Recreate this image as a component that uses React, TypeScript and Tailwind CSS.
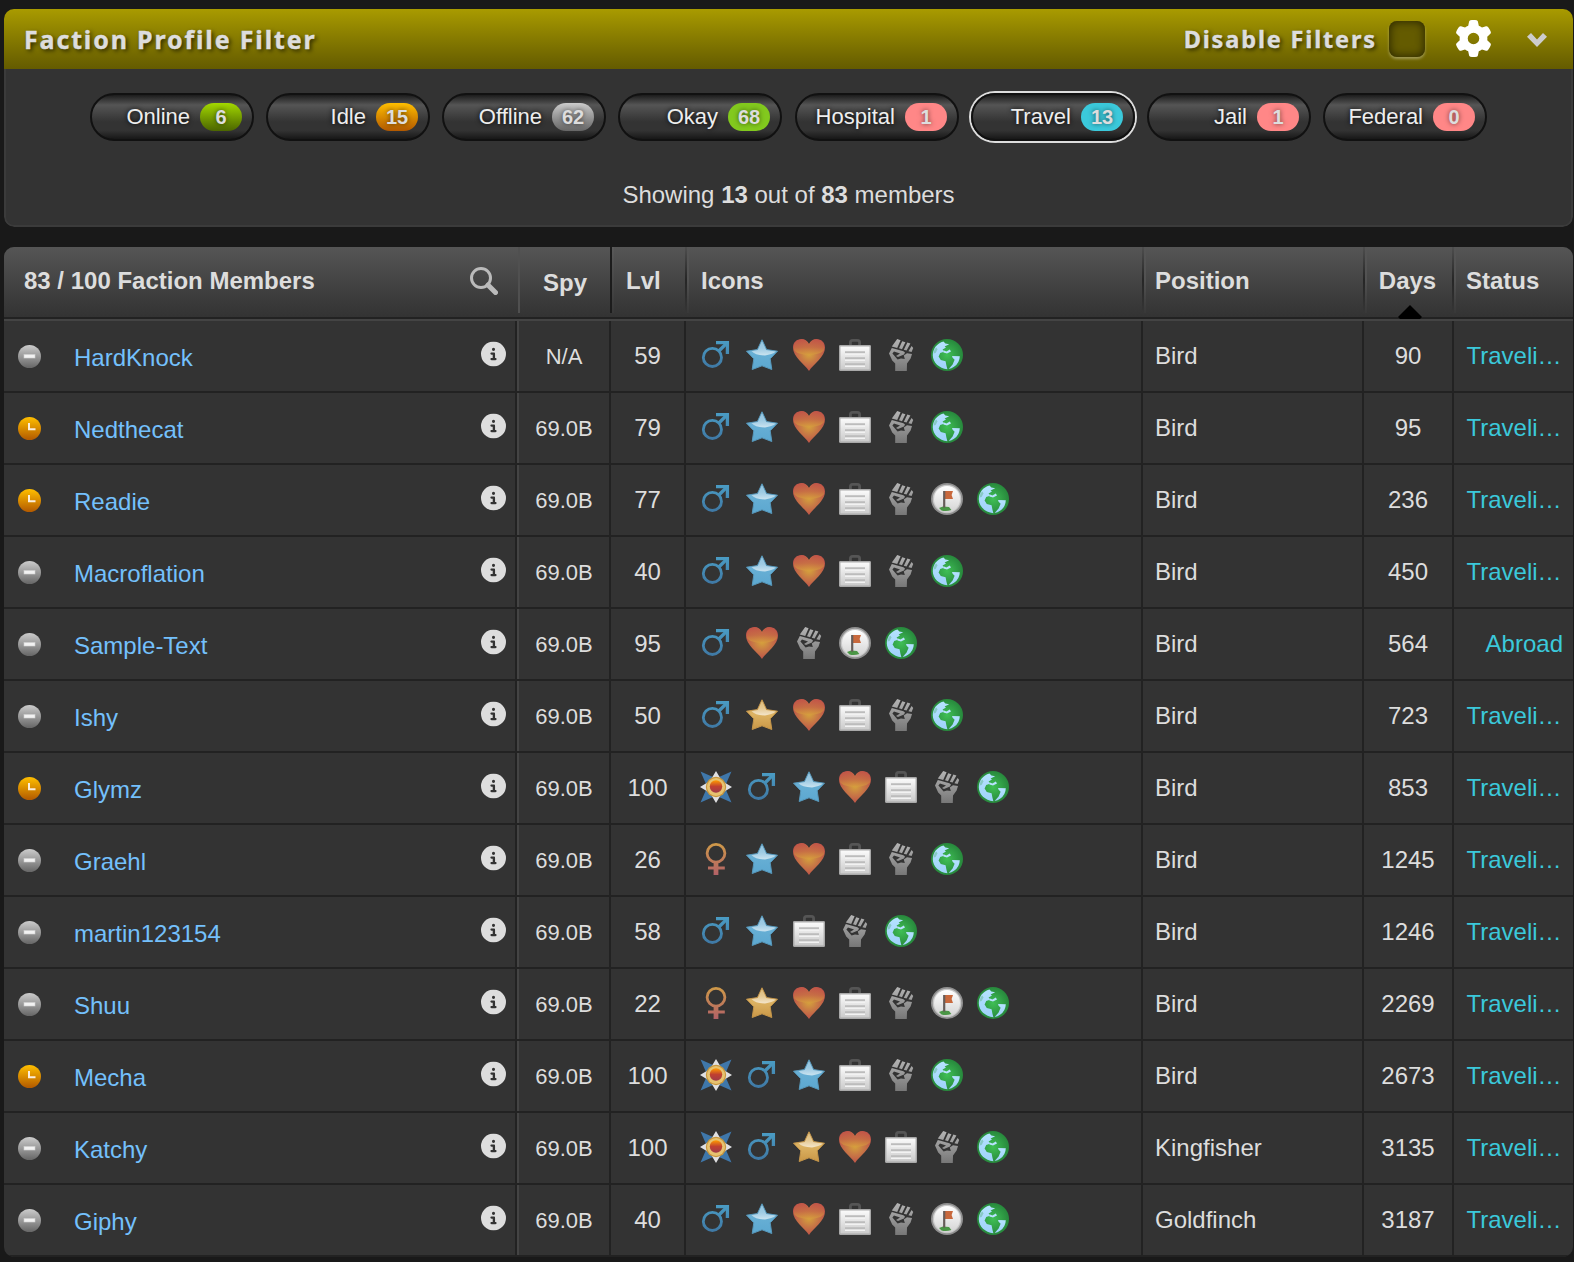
import React from "react";
import { FaGear, FaCircleInfo } from "react-icons/fa6";

type IconName = "medal" | "male" | "female" | "blueStar" | "goldStar" | "heart" | "job" | "fist" | "flag" | "globe";

const CODES: Record<string, IconName> = {
  M: "medal",
  m: "male",
  f: "female",
  b: "blueStar",
  g: "goldStar",
  h: "heart",
  j: "job",
  x: "fist",
  r: "flag",
  w: "globe",
};

interface Member {
  name: string;
  idle?: boolean;
  spy: string;
  lvl: number;
  icons: string;
  position: string;
  days: number;
  abroad?: boolean;
}

const MEMBERS: Member[] = [
  { name: "HardKnock", spy: "N/A", lvl: 59, icons: "mbhjxw", position: "Bird", days: 90 },
  { name: "Nedthecat", idle: true, spy: "69.0B", lvl: 79, icons: "mbhjxw", position: "Bird", days: 95 },
  { name: "Readie", idle: true, spy: "69.0B", lvl: 77, icons: "mbhjxrw", position: "Bird", days: 236 },
  { name: "Macroflation", spy: "69.0B", lvl: 40, icons: "mbhjxw", position: "Bird", days: 450 },
  { name: "Sample-Text", spy: "69.0B", lvl: 95, icons: "mhxrw", position: "Bird", days: 564, abroad: true },
  { name: "Ishy", spy: "69.0B", lvl: 50, icons: "mghjxw", position: "Bird", days: 723 },
  { name: "Glymz", idle: true, spy: "69.0B", lvl: 100, icons: "Mmbhjxw", position: "Bird", days: 853 },
  { name: "Graehl", spy: "69.0B", lvl: 26, icons: "fbhjxw", position: "Bird", days: 1245 },
  { name: "martin123154", spy: "69.0B", lvl: 58, icons: "mbjxw", position: "Bird", days: 1246 },
  { name: "Shuu", spy: "69.0B", lvl: 22, icons: "fghjxrw", position: "Bird", days: 2269 },
  { name: "Mecha", idle: true, spy: "69.0B", lvl: 100, icons: "Mmbjxw", position: "Bird", days: 2673 },
  { name: "Katchy", spy: "69.0B", lvl: 100, icons: "Mmghjxw", position: "Kingfisher", days: 3135 },
  { name: "Giphy", spy: "69.0B", lvl: 40, icons: "mbhjxrw", position: "Goldfinch", days: 3187 },
];

interface Filter {
  label: string;
  count: number;
  badge: string;
  active?: boolean;
}

const ACTIVITY_FILTERS: Filter[] = [
  { label: "Online", count: 6, badge: "bg-linear-to-b from-[#a3d900] to-[#4c6600]" },
  { label: "Idle", count: 15, badge: "bg-linear-to-b from-[#ffbf00] to-[#b25900]" },
  { label: "Offline", count: 62, badge: "bg-linear-to-b from-[#cccccc] to-[#666666]" },
  { label: "Okay", count: 68, badge: "bg-[#82c91e]" },
];

const STATUS_FILTERS: Filter[] = [
  { label: "Hospital", count: 1, badge: "bg-[#ff8787]" },
  { label: "Travel", count: 13, badge: "bg-[#3bc9db]", active: true },
  { label: "Jail", count: 1, badge: "bg-[#ff8787]" },
  { label: "Federal", count: 0, badge: "bg-[#ff8787]" },
];

/** Gradients shared by every icon in the table. */
function IconDefs() {
  const linear = (id: string, stops: string[]) => (
    <linearGradient id={id} x1="0" y1="0" x2="0" y2="1">
      {stops.map((c, i) => (
        <stop key={i} offset={i / (stops.length - 1)} stopColor={c} />
      ))}
    </linearGradient>
  );
  return (
    <svg width="0" height="0" className="absolute" aria-hidden>
      <defs>
        <linearGradient id="male" gradientUnits="userSpaceOnUse" x1="0" y1="2" x2="0" y2="29">
          <stop offset="0" stopColor="#4a9cc4" />
          <stop offset="1" stopColor="#3f78a4" />
        </linearGradient>
        <linearGradient id="female" gradientUnits="userSpaceOnUse" x1="0" y1="0" x2="0" y2="32">
          <stop offset="0" stopColor="#cf9a48" />
          <stop offset="1" stopColor="#b26167" />
        </linearGradient>
        {linear("blueStar", ["#7fb8d8", "#66aed4", "#5ca8d0"])}
        {linear("goldStar", ["#d4ab5c", "#dcb262", "#c99747"])}
        {linear("gloss", ["#ffffff30", "#ffffff50", "#ffffffa8"])}
        {linear("heartTop", ["#c25548", "#c66a45", "#d69c3e"])}
        {linear("job", ["#fcfcfc", "#c9c9c9"])}
        {linear("fist", ["#b4b4b4", "#777777"])}
        {linear("sea", ["#b5e2ff", "#9fd2fa"])}
        {linear("offline", ["#cccccc", "#666666"])}
        {linear("idle", ["#ffbf00", "#b25900"])}
        {linear("core", ["#ff9a00", "#c04030", "#a03a48"])}
        {linear("flagDisc", ["#ffffff", "#d4d4d4"])}
        <radialGradient id="heart" gradientUnits="userSpaceOnUse" cx="16" cy="15" r="17">
          <stop offset="0" stopColor="#d6a43c" />
          <stop offset="0.5" stopColor="#c87a45" />
          <stop offset="1" stopColor="#bf5349" />
        </radialGradient>
        <radialGradient id="land" cx="0.5" cy="0.5" r="0.5">
          <stop offset="0" stopColor="#3fbf55" />
          <stop offset="1" stopColor="#27883c" />
        </radialGradient>
      </defs>
    </svg>
  );
}

function Star({ fill, edge }: { fill: string; edge: string }) {
  return (
    <>
      <path
        d="M16 .8 20.600 10.600 31.500 12.200 24.200 19.800 25.800 30.500 16 26.800 6.200 30.500 7.800 19.800 .5 12.200 11.400 10.600Z"
        fill={fill}
        stroke={edge}
        strokeWidth="1"
        strokeLinejoin="round"
      />
      <path d="M16 1.800 20.200 11.100 30 12.600Q26 15.800 19 16.400 9 16.400 5.500 12L11.800 11.100Z" fill="url(#gloss)" />
    </>
  );
}

const DRAWINGS: Record<IconName, React.ReactNode> = {
  medal: (
    <>
      <path d="M.5.5 13 6h6L31.5.5 26 13v6l5.5 12.500L19 26h-6L.5 31.500 6 19v-6Z" fill="#3f77aa" />
      <path d="M16 0 22 10 32 16 22 22 16 32 10 22 0 16 10 10Z" fill="#e0e0e2" />
      <circle cx="16" cy="16" r="10.200" fill="#c8963c" />
      <circle cx="16" cy="16" r="9" fill="#e6c270" />
      <circle cx="16" cy="15.500" r="6.200" fill="url(#core)" />
    </>
  ),
  male: (
    <g fill="none" stroke="url(#male)">
      <circle cx="12.400" cy="18.400" r="9.100" strokeWidth="2.800" />
      <path d="M16 3.600H27.400V15" strokeWidth="3.300" />
      <path d="M18.600 12.200 27.600 3.400" strokeWidth="3.400" />
    </g>
  ),
  female: (
    <g fill="none" stroke="url(#female)">
      <circle cx="16" cy="10.300" r="8.900" strokeWidth="2.800" />
      <path d="M16.010 19.500 16 32" strokeWidth="4.800" />
      <path d="M8 25 24.800 24.990" strokeWidth="3.200" />
    </g>
  ),
  blueStar: <Star fill="url(#blueStar)" edge="#5798bb" />,
  goldStar: <Star fill="url(#goldStar)" edge="#c4954a" />,
  heart: (
    <>
      <path d="M16 32C11.500 25 0 18 0 8.500 0 3.500 3.700 0 8.500 0 12 0 14.800 2 16 5 17.200 2 20 0 23.500 0 28.300 0 32 3.500 32 8.500 32 18 20.500 25 16 32Z" fill="url(#heart)" />
      <path d="M.8 11C.3 4 3.700.6 8.500.6 12 .6 14.800 3 16 6 17.200 3 20 .6 23.500.6 28.300.6 31.700 4 31.200 11 27 17.400 5 17.400.8 11Z" fill="url(#heartTop)" opacity=".8" />
    </>
  ),
  job: (
    <>
      <path d="M11.400 7V3.500Q11.400 1.400 13.500 1.400H18.500Q20.600 1.400 20.600 3.500V7" fill="none" stroke="#555" strokeWidth="2.800" />
      <rect x=".7" y="6.700" width="30.600" height="24.600" rx=".6" fill="url(#job)" stroke="#a9a9a9" strokeWidth="1.400" />
      <path d="M6 13.200H26M6 19.200H26M6 25.200H26" stroke="#bcbcbc" strokeWidth="2" />
      <path d="M6 15.200H26M6 21.200H26M6 27.200H26" stroke="#f2f2f2" strokeWidth="1.400" />
    </>
  ),
  fist: (
    <path
      d="M12.200 0 15.600 1.200 12.200 9 6.800 7.400ZM17.200 2.200 20.400 3.200 17 10.200 14 9.200ZM22.400 3.600 25.400 4.600 21.600 11.600 18.800 10.800ZM26.600 7 28.200 9 26.600 13 23.400 12.200ZM6.800 9 18.400 12.200 20 13.400 19 15.400 13 18 11 17 15 14.600 9 12.400 7.400 14.600 12.600 20.400 16 19.400 19.800 20 18.800 16.600 22 14.200 27 15 25.600 19.400 22 24.400 21.800 32H10.200V24.600L7.200 21.400 4 14.400Z"
      fill="url(#fist)"
    />
  ),
  flag: (
    <>
      <circle cx="16" cy="16" r="16" fill="#8f8f8f" />
      <circle cx="16" cy="16" r="14.300" fill="#c8c8c8" />
      <circle cx="16" cy="16" r="13" fill="url(#flagDisc)" />
      <path d="M8 25 12 23.600 18 24 20.400 27Q15 28.800 10.500 27.400Z" fill="#4a9645" />
      <path d="M14 8H22L20.600 12 22 16H14Z" fill="#c8683c" />
      <path d="M13.200 8V24.600" stroke="#665c58" strokeWidth="2.200" />
    </>
  ),
  globe: (
    <>
      <circle cx="16" cy="16" r="16" fill="url(#land)" />
      <path d="M12.500 2.600C6 4.200 1.700 10 1.800 16.500 2 23.500 8 29.400 16.400 30.200L15.400 26.600 14.600 22.200 9.800 21 7.600 17.400 9.200 14 13 12.800 11.600 10.400 15 8.600 13.600 7.400 18.200 5.200 14.400 4.600Z" fill="url(#sea)" />
      <path d="M12.400 11.200 15.400 12.400 18.800 10.400 20 12.600 16 14.600 12.400 13.400Z" fill="#b9e2ff" />
      <path d="M21 17 28.800 17.200Q28.600 24 23 27.800 20.600 29.600 17.600 30L21.600 25.400 23.600 20.800 21.600 18.800Z" fill="url(#sea)" />
      <path d="M3.600 10 5.600 8.500 6.400 10.500 4.600 14 2.600 14.500Z" fill="#2f9a47" opacity=".3" />
    </>
  ),
};

function MemberIcon({ name }: { name: IconName }) {
  return (
    <svg viewBox="0 0 32 32" className="size-8 shrink-0">
      {DRAWINGS[name]}
    </svg>
  );
}

function Presence({ idle }: { idle?: boolean }) {
  return (
    <svg viewBox="0 0 23 23" className="size-[23px] shrink-0">
      <circle cx="11.5" cy="11.5" r="11.500" fill={idle ? "url(#idle)" : "url(#offline)"} />
      {idle ? (
        <path d="M11 6V12.200H17.500" fill="none" stroke="#fbeedd" strokeWidth="2" />
      ) : (
        <rect x="6" y="9.500" width="11" height="3.500" fill="#f2f2f2" stroke="#d0d0d0" strokeWidth=".6" />
      )}
    </svg>
  );
}

function FilterPill({ label, count, badge, active }: Filter) {
  return (
    <div
      className={`flex h-12 w-[164px] items-center justify-end gap-2.5 rounded-full border-2 border-[#111] bg-[linear-gradient(180deg,#111_0%,#555_25%,#333_60%,#333_78%,#111_100%)] bg-origin-border pr-2.5 text-[22px] text-[#eee] [text-shadow:0_0_5px_#000] ${active ? "ring-2 ring-[#ddd]" : ""}`}
    >
      <span className="leading-7">{label}</span>
      <span
        className={`flex h-7 w-[42px] items-center justify-center rounded-[14px] text-[20px] font-bold text-[#ddd] [text-shadow:0_0_5px_#0009] ${badge}`}
      >
        {count}
      </span>
    </div>
  );
}

function Divider() {
  return (
    <div className="flex h-[66px] w-1 shrink-0">
      <div className="w-0.5 bg-linear-to-b from-[#4e4e4e] via-[#262626] to-[#363636]" />
      <div className="w-0.5 bg-linear-to-b from-[#555] via-[#525252] to-[#383838]" />
    </div>
  );
}

const COLS = "grid grid-cols-[513px_94px_75px_457px_221px_90px_119px]";
const CELL = "flex items-center border-r-2 border-[#222]";

export default function App() {
  return (
    <div className="h-[1262px] w-[1574px] overflow-hidden bg-[#191919] pt-[9px] pl-1 font-['Liberation_Sans',Arial,sans-serif] text-[24px] leading-[28px] text-[#ddd]">
      <IconDefs />
      <section className="flex h-[218px] w-[1569px] flex-col overflow-hidden rounded-[10px]">
        <header className="flex h-[60px] shrink-0 items-center bg-linear-to-b from-[#a99b00] to-[#645b00] pr-[26px] pl-5 font-['Noto_Sans',sans-serif] text-[25px] font-bold tracking-[1.85px] [text-shadow:2px_2px_4px_#000a]">
          <h1 className="grow [-webkit-text-stroke:0.4px_#ddd]">Faction Profile Filter</h1>
          <span className="text-[23.5px] tracking-[1.85px] [-webkit-text-stroke:0.4px_#ddd]">Disable Filters</span>
          <span className="ml-3 size-9 rounded-lg bg-[#645b00] shadow-[inset_0_0_8px_1px_#2c2800,0_2px_3px_#ffffff55]" />
          <FaGear className="ml-[30px] size-[37px] -translate-y-px text-white" />
          <svg viewBox="0 0 20 14" className="ml-[35px] h-3.5 w-5 translate-y-px">
            <path d="M4 0 10 6.500 16 0 20 3.800 10 14 0 3.800Z" fill="#ccc" />
          </svg>
        </header>
        <div className="flex grow flex-col items-center rounded-b-[10px] border-2 border-t-0 border-[#3b3b3b] bg-[#333] pt-6">
          <div className="flex gap-[13px]">
            <div className="flex gap-3">
              {ACTIVITY_FILTERS.map((f) => (
                <FilterPill key={f.label} {...f} />
              ))}
            </div>
            <div className="flex gap-3">
              {STATUS_FILTERS.map((f) => (
                <FilterPill key={f.label} {...f} />
              ))}
            </div>
          </div>
          <p className="mt-10">
            Showing <b>13</b> out of <b>83</b> members
          </p>
        </div>
      </section>

      <section className="mt-5 w-[1569px] overflow-hidden rounded-[10px] bg-[#333]">
        <div className="flex h-[74px] flex-col border-b-2 border-[#444] bg-[#222]">
          <div className="flex h-[70px] bg-linear-to-b from-[#555] to-[#333] font-bold">
            <div className="flex w-[514px] items-center justify-between pr-[20px] pb-0.5 pl-5">
              <span>83 / 100 Faction Members</span>
              <svg viewBox="0 0 28 28" className="size-7">
                <circle cx="11" cy="11" r="9.500" fill="none" stroke="#bbb" strokeWidth="3" />
                <path d="M18 18 25.500 25.500" stroke="#bbb" strokeWidth="5" strokeLinecap="round" />
              </svg>
            </div>
            <div className="h-[66px] w-0.5 bg-[#505050]" />
            <div className="flex w-[90px] items-center justify-center pt-0.5">Spy</div>
            <div className="h-[66px] w-0.5 bg-[#1c1c1c]" />
            <div className="h-[66px] w-0.5 bg-linear-to-b from-[#5a5a5a] to-[#383838]" />
            <div className="flex w-[71px] items-center pb-0.5 pl-3">Lvl</div>
            <Divider />
            <div className="flex w-[453px] items-center pb-0.5 pl-3">Icons</div>
            <Divider />
            <div className="flex w-[217px] items-center pb-0.5 pl-[9px]">Position</div>
            <Divider />
            <div className="relative flex w-[85px] items-center justify-center pr-1 pb-0.5">
              Days
              <svg viewBox="0 0 24 14" className="absolute bottom-[-2px] left-[31px] h-3.5 w-6">
                <path d="M12 0 24 12 22 14H2L0 12Z" fill="#000" />
              </svg>
            </div>
            <Divider />
            <div className="flex items-center pb-0.5 pl-[10px]">Status</div>
          </div>
        </div>

        {MEMBERS.map((m) => (
          <div key={m.name} className={`${COLS} h-[72px] border-b-2 border-[#222]`}>
            <div className={`${CELL} pr-[9.5px] pl-[14px]`}>
              <Presence idle={m.idle} />
              <span className="ml-[33px] grow pt-1 text-[#74c0fc]">{m.name}</span>
              <FaCircleInfo className="size-[25px] -translate-y-[2.500px]" />
            </div>
            <div className={`${CELL} justify-center border-l-2 border-l-[#444] pt-0.5 text-[22px]`}>{m.spy}</div>
            <div className={`${CELL} justify-center`}>{m.lvl}</div>
            <div className={`${CELL} gap-[14.2px] pb-0.5 pl-[14.15px]`}>
              {m.icons.split("").map((c) => (
                <MemberIcon key={c} name={CODES[c]} />
              ))}
            </div>
            <div className={`${CELL} pl-3`}>{m.position}</div>
            <div className={`${CELL} justify-center`}>{m.days}</div>
            <div className={`flex items-center text-[#3bc9db] ${m.abroad ? "justify-end pr-2.5" : "pl-[12.5px]"}`}>
              {m.abroad ? "Abroad" : "Traveli…"}
            </div>
          </div>
        ))}
      </section>
    </div>
  );
}
